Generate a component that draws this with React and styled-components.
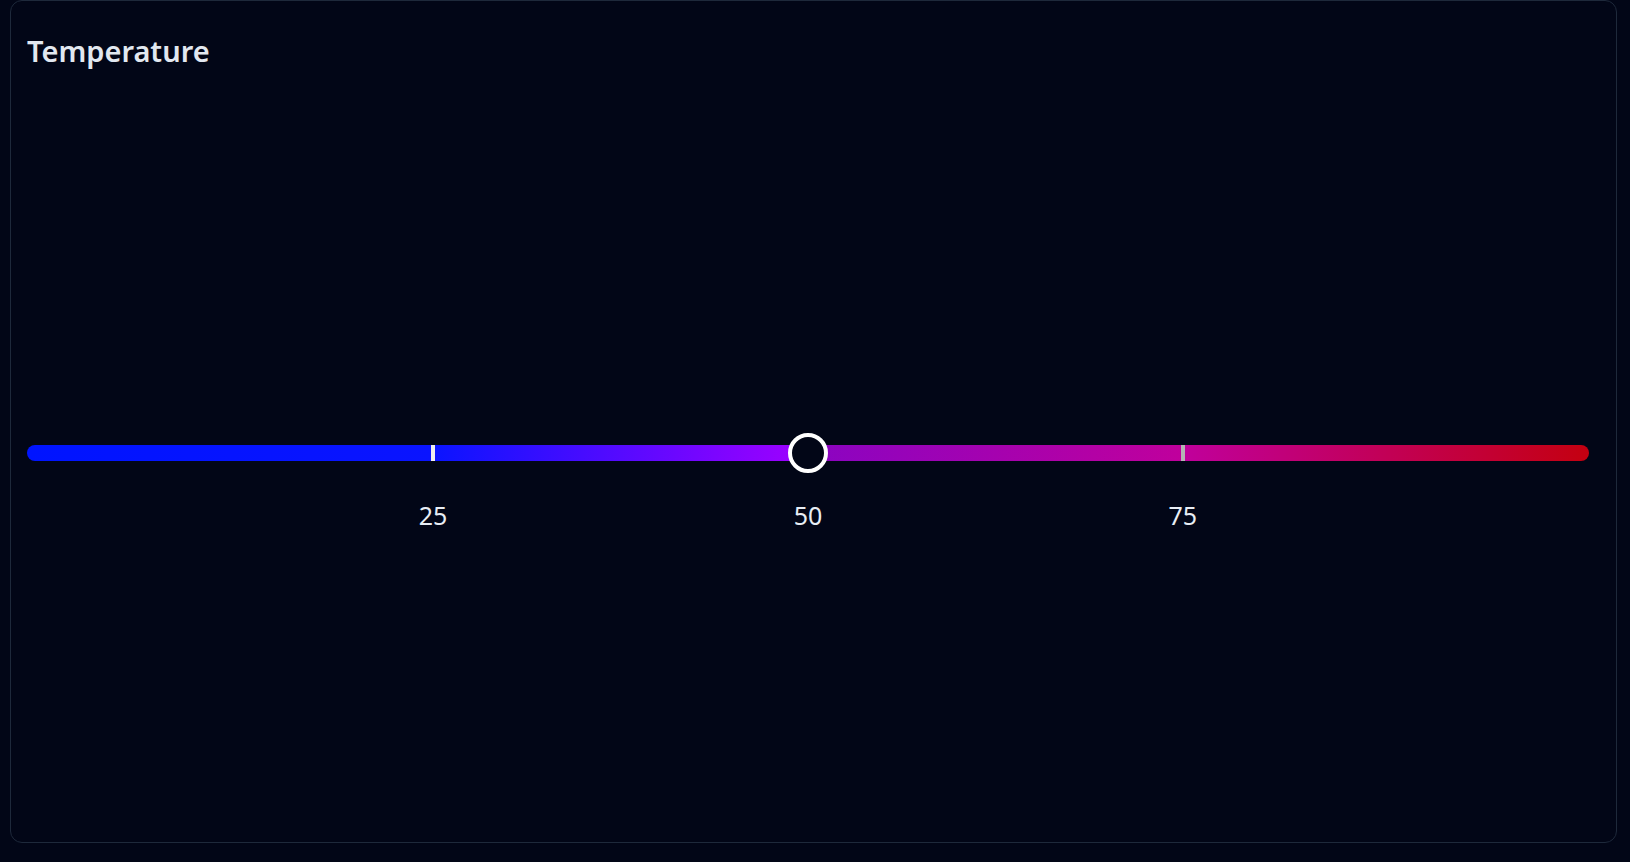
import React from 'react'
import styled, { createGlobalStyle } from 'styled-components'

const GlobalStyle = createGlobalStyle`
  html, body {
    margin: 0;
    padding: 0;
    background: #020617;
    font-family: "Noto Sans", "Open Sans", sans-serif;
  }
`

const marks = [
  { value: 25, at: 26, color: '#eeeeee' },
  { value: 50, at: 50 },
  { value: 75, at: 74, color: '#b4b4b4' },
]

const Page = styled.div`
  padding: 0 13px 0 10px;
`

const Card = styled.section`
  box-sizing: border-box;
  height: 843px;
  display: flex;
  flex-direction: column;
  padding: 16px;
  border: 1px solid #1e293b;
  border-radius: 12px;
  background: #020617;
`

const Title = styled.h2`
  margin: 16px 0 0;
  font-size: 29px;
  line-height: 36px;
  font-weight: 600;
  color: #e2e8f0;
`

const SliderArea = styled.div`
  flex: 1;
  display: flex;
  flex-direction: column;
  justify-content: center;
  padding: 69px 11px 0 0;
`

const TrackRow = styled.div`
  position: relative;
  height: 40px;
  display: flex;
  align-items: center;
`

const Track = styled.div`
  flex: 1;
  height: 16px;
  border-radius: 8px;
  background: linear-gradient(
    to right,
    #0014ff 0%,
    #0a14ff 26%,
    #a100ff 50%,
    #8a04c2 50%,
    #c0009c 74%,
    #c40010 100%
  );
`

const Tick = styled.span`
  position: absolute;
  top: 12px;
  width: 4px;
  height: 16px;
  margin-left: -2px;
  background: ${p => p.$color};
`

const Thumb = styled.span`
  position: absolute;
  top: 0;
  box-sizing: border-box;
  width: 40px;
  height: 40px;
  margin-left: -20px;
  border: 4px solid #ffffff;
  border-radius: 50%;
  background: #020617;
`

const Labels = styled.div`
  position: relative;
  height: 34px;
  margin-top: 25px;
`

const Label = styled.span`
  position: absolute;
  top: 0;
  transform: translateX(-50%);
  font-size: 25px;
  line-height: 34px;
  color: #e8edf5;
`

export default function App() {
  const value = 50
  return (
    <>
      <GlobalStyle />
      <Page>
        <Card>
          <Title>Temperature</Title>
          <SliderArea>
            <TrackRow>
              <Track />
              {marks.filter(m => m.color).map(m => (
                <Tick key={m.value} $color={m.color} style={{ left: `${m.at}%` }} />
              ))}
              <Thumb style={{ left: `${value}%` }} />
            </TrackRow>
            <Labels>
              {marks.map(m => (
                <Label key={m.value} style={{ left: `${m.at}%` }}>{m.value}</Label>
              ))}
            </Labels>
          </SliderArea>
        </Card>
      </Page>
    </>
  )
}
